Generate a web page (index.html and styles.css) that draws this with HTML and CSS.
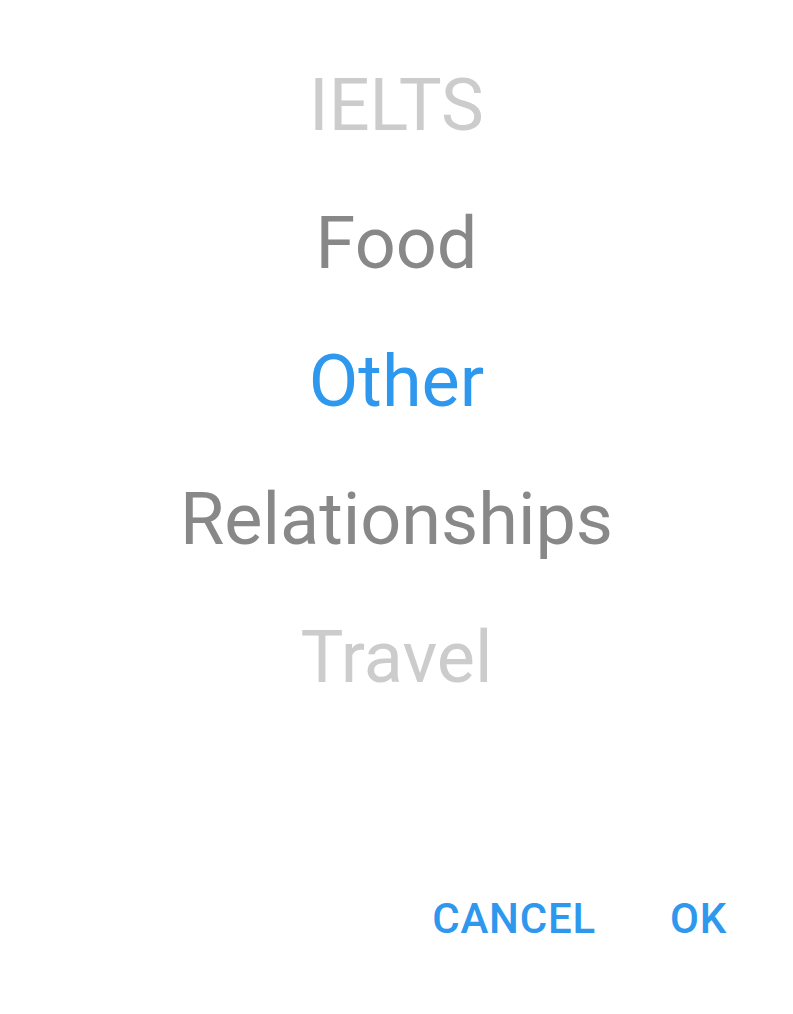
FILE: index.html
```html
<!DOCTYPE html>
<html>
<head>
<meta charset="utf-8">
<link rel="stylesheet" href="styles.css">
</head>
<body>
<div class="dialog">
  <div class="picker">
    <div class="item far">IELTS</div>
    <div class="item near">Food</div>
    <div class="item selected">Other</div>
    <div class="item near">Relationships</div>
    <div class="item far">Travel</div>
  </div>
  <div class="actions">
    <span class="btn">CANCEL</span>
    <span class="btn">OK</span>
  </div>
</div>
</body>
</html>
```
FILE: styles.css
```css
html, body {
  margin: 0;
  padding: 0;
  background: #ffffff;
}
.dialog {
  width: 793px;
  height: 1014px;
  font-family: Roboto, "Noto Sans", sans-serif;
  display: flex;
  flex-direction: column;
}
.picker {
  padding-top: 37px;
  display: flex;
  flex-direction: column;
  align-items: center;
}
.item {
  font-size: 72px;
  line-height: 138px;
  height: 138px;
  text-align: center;
}
.far { color: #cccccc; }
.near { color: #888888; }
.selected { color: #2e97ee; }
.actions {
  margin-top: 168px;
  display: flex;
  justify-content: flex-end;
  gap: 74px;
  padding-right: 66px;
}
.btn {
  font-size: 42px;
  font-weight: 500;
  letter-spacing: 0.8px;
  line-height: 48px;
  color: #2e97ee;
}
```
